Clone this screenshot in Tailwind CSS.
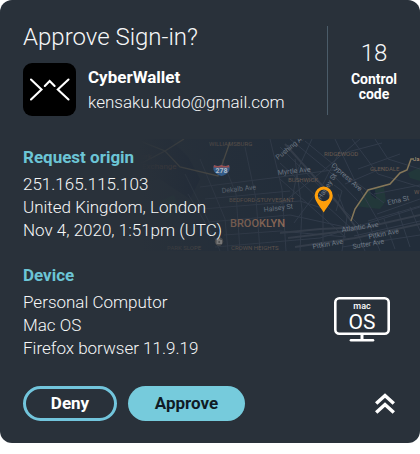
<!DOCTYPE html>
<html lang="en">
<head>
<meta charset="utf-8">
<meta name="viewport" content="width=device-width, initial-scale=1">
<title>Approve Sign-in</title>
<script src="https://cdn.jsdelivr.net/npm/@tailwindcss/browser@4"></script>
</head>
<body class="bg-white font-['Roboto',sans-serif]">
<main class="overflow-hidden rounded-xl bg-[#29313a] pt-6 pb-[22px] text-[17px] text-[#f6f7f8]">
  <header class="flex justify-between pr-[22px] pl-[23px]">
    <div>
      <h1 class="text-2xl leading-[27px] font-light">Approve Sign-in?</h1>
      <div class="mt-3 flex items-center gap-3">
        <svg class="size-[53px]" viewBox="0 0 53 53" fill="none" stroke="#fff" stroke-width="2.1" stroke-linecap="round" role="img" aria-label="CyberWallet logo">
          <rect width="53" height="53" rx="9" fill="#000" stroke="none"/>
          <path d="M8 16.500L18.500 26.500L8 36.500M45.500 16.500L34.800 26.500L45.500 36.500M21.800 23L26.700 18L31.600 23"/>
        </svg>
        <div>
          <h2 class="leading-[25px] font-bold text-white">CyberWallet</h2>
          <p class="leading-[25px] font-light">kensaku.kudo@gmail.com</p>
        </div>
      </div>
    </div>
    <div class="mt-0.5 mb-px flex">
      <div class="w-px bg-[#4b5c69]"></div>
      <div class="ml-[22px] w-12 pt-3 text-center">
        <p class="text-2xl leading-[30px] font-light">18</p>
        <p class="mt-1 text-sm leading-[15px] font-bold text-white">Control code</p>
      </div>
    </div>
  </header>

  <section class="relative mt-[23px] pt-1.5 pb-2 pl-[23px]">
    <svg class="absolute top-0 right-0 h-[112px] w-[280px]" viewBox="0 0 280 112" aria-hidden="true">
      <defs>
        <linearGradient id="fade" x1="0" x2="1" y1="0" y2="0">
          <stop offset="0" stop-color="#29313a"/>
          <stop offset=".25" stop-color="#29313a" stop-opacity=".45"/>
          <stop offset=".6" stop-color="#29313a" stop-opacity="0"/>
        </linearGradient>
      </defs>
      <rect width="280" height="112" fill="#222d3a"/>
      <path fill="#22383a" d="M217 67L227 51L244 48L246 62L240 70L222 68ZM268 34L280 28V42L270 39ZM20 62L34 56L40 70L26 80Z"/>
      <path fill="#1b2637" d="M230 50L235 51L236 60L231 56ZM0 0H30L48 18L60 40L50 60L20 40L0 44Z"/>
      <g fill="none" stroke="#323c4b" stroke-width="1">
        <path d="M60 48L140 38L200 30M65 60L150 52M62 70L160 62L185 70M68 83L150 76L205 88M84 96L140 92L206 98M75 108L180 99L280 68M82 20L96 55L100 112M105 8L116 60L120 112M130 0L142 50L146 112M155 20L162 70L160 112M60 20L85 80L88 112M45 35L70 85M48 55L75 100L80 112"/>
        <path d="M140 8L220 87M150 0L190 33L218 62M140 24L212 90M140 40L205 98M165 2L205 35L244 64M140 66L185 30L220 0M154 84L183 45L200 12M172 0L158 30L152 60M195 0L215 42L240 85M212 0L238 35L280 48M235 0L248 20L280 30M200 15L242 4M218 30L260 15M205 45L245 28"/>
        <path d="M183 70V112M198 55L207 78L202 112M216 90L225 112M229 85L240 112M244 80L255 110M258 72L270 108M270 68L280 92M214 97L280 82M202 108L280 96M234 55L280 46M237 75L280 60M228 82L280 67M194 46L202 52L196 72"/>
      </g>
      <g fill="none" stroke="#343d4a" stroke-width="2">
        <path d="M148 99L214 91L280 76M155 108L215 99L280 85M145 5L196 62L218 91M140 94L180 90L224 88"/>
      </g>
      <path d="M0 2L25 12L40 28L78 37L90 3M0 25L25 12L44 0" fill="none" stroke="#5c564a" stroke-width="1.300"/>
      <path d="M211 82L215 70L228 51L250 45L260 34L267 31L271 20L274 20" fill="none" stroke="#857759" stroke-width="1.500"/>
      <g class="font-['Roboto',sans-serif] text-[7px]" fill="#717b87">
        <text x="82" y="54" transform="rotate(-6 82 54)">Dekalb Ave</text>
        <text x="124" y="73" transform="rotate(-7 124 73)">Halsey St</text>
        <text x="138" y="21" transform="rotate(-39 138 21)">Pushing Ave</text>
        <text x="138" y="36" transform="rotate(-6 138 36)">Myrtle Ave</text>
        <text x="191" y="27" transform="rotate(42 191 27)">Cypress Ave</text>
        <text x="181" y="61" transform="rotate(-57 181 61)">Halsey St</text>
        <text x="248" y="66" transform="rotate(-13 248 66)">Etna St</text>
        <text x="202" y="93" transform="rotate(-8 202 93)">Atlantic Ave</text>
        <text x="229" y="100" transform="rotate(-11 229 100)">Pitkin Ave</text>
        <text x="213" y="110" transform="rotate(-10 213 110)">Sutter Ave</text>
        <text x="173" y="110" transform="rotate(-10 173 110)">Pitkin Ave</text>
      </g>
      <g class="font-['Roboto',sans-serif] text-[6px]" fill="#6a5b50">
        <text x="69" y="7">WILLIAMSBURG</text>
        <text x="89" y="63">BEDFORD-STUYVESANT</text>
        <text x="27" y="111">PARK SLOPE</text>
        <text x="91" y="111">CROWN HEIGHTS</text>
        <text x="184" y="17">RIDGEWOOD</text>
        <text x="148" y="43">BUSHWICK</text>
        <text x="230" y="32">GLENDALE</text>
        <text x="274" y="55">W</text>
        <text x="273" y="22" fill="#b3987a">Ja</text>
      </g>
      <g class="font-['Roboto',sans-serif] text-[8px]" fill="#70503f">
        <text x="-4" y="20">York</text>
        <text x="2" y="30">Exchange</text>
      </g>
      <text class="font-['Roboto',sans-serif] text-[11px] font-medium" x="90" y="88" fill="#97705a">BROOKLYN</text>
      <rect width="280" height="112" fill="url(#fade)"/>
      <path d="M74 26Q78 28 81.500 26Q85 28 89 26Q92 34 81.500 37Q71 34 74 26Z" fill="#335b88"/>
      <path d="M74 26Q78 28 81.500 26Q85 28 89 26L89.500 28.500H73.500Z" fill="#9a4f4f"/>
      <text class="font-['Roboto',sans-serif] text-[7px] font-bold" x="81.500" y="34" text-anchor="middle" fill="#b4bcc5">278</text>
      <circle cx="79" cy="102.500" r="4.200" fill="#4b4c4e"/>
      <path d="M76.500 101H78L78.500 100H80L80.500 101H82V105H76.500Z" fill="#777"/>
      <circle cx="79.200" cy="103" r="1" fill="#4b4c4e"/>
      <path fill="#ff9f0a" fill-rule="evenodd" d="M183.700 47.500A9 9 0 0 0 174.700 56.500C174.700 62 179 66 183.700 73.500C188.400 66 192.700 62 192.700 56.500A9 9 0 0 0 183.700 47.500ZM183.700 50.500A5.900 5.900 0 1 1 183.700 62.300A5.900 5.900 0 1 1 183.700 50.500Z"/>
    </svg>
    <div class="relative">
      <h2 class="leading-6 font-bold text-[#6cc5d6]">Request origin</h2>
      <p class="mt-1 leading-[23px] font-light">251.165.115.103<br>United Kingdom, London<br>Nov 4, 2020, 1:51pm (UTC)</p>
    </div>
  </section>

  <section class="mt-[13px] flex items-end justify-between pr-[30px] pl-[23px]">
    <div>
      <h2 class="leading-6 font-bold text-[#6cc5d6]">Device</h2>
      <p class="mt-1 leading-[23px] font-light">Personal Computor<br>Mac OS<br>Firefox borwser 11.9.19</p>
    </div>
    <svg class="mb-[18px] h-[45px] w-14" viewBox="0 0 56 45" fill="none" stroke="#fff" role="img" aria-label="mac OS">
      <rect x="1.300" y="1.300" width="53.400" height="35.400" rx="4" stroke-width="2.600"/>
      <path d="M28 37V43" stroke-width="3"/>
      <path d="M17 43.300H39" stroke-width="2.600" stroke-linecap="round"/>
      <text class="font-['Roboto',sans-serif] text-[9px] font-medium" x="28" y="11.500" text-anchor="middle" fill="#fff" stroke="none">mac</text>
      <text class="font-['Roboto',sans-serif] text-[21px]" x="28" y="31.500" text-anchor="middle" fill="#fff" stroke="none">OS</text>
    </svg>
  </section>

  <footer class="mt-[26px] flex items-center justify-between pr-[25px] pl-[23px]">
    <div class="flex gap-[11px]">
      <button type="button" class="h-[35px] w-[94px] rounded-full border-3 border-[#72c5dc] font-bold text-white">Deny</button>
      <button type="button" class="h-[35px] w-[117px] rounded-full bg-[#76cbdc] font-bold text-[#101b25]">Approve</button>
    </div>
    <button type="button" aria-label="Collapse details">
      <svg class="h-[21px] w-5" viewBox="0 0 20 21" fill="none" stroke="#fff" stroke-width="3.500"><path d="M1.200 10.500L10 2.500L18.800 10.500M1.200 19.500L10 11.500L18.800 19.500"/></svg>
    </button>
  </footer>
</main>
</body>
</html>
